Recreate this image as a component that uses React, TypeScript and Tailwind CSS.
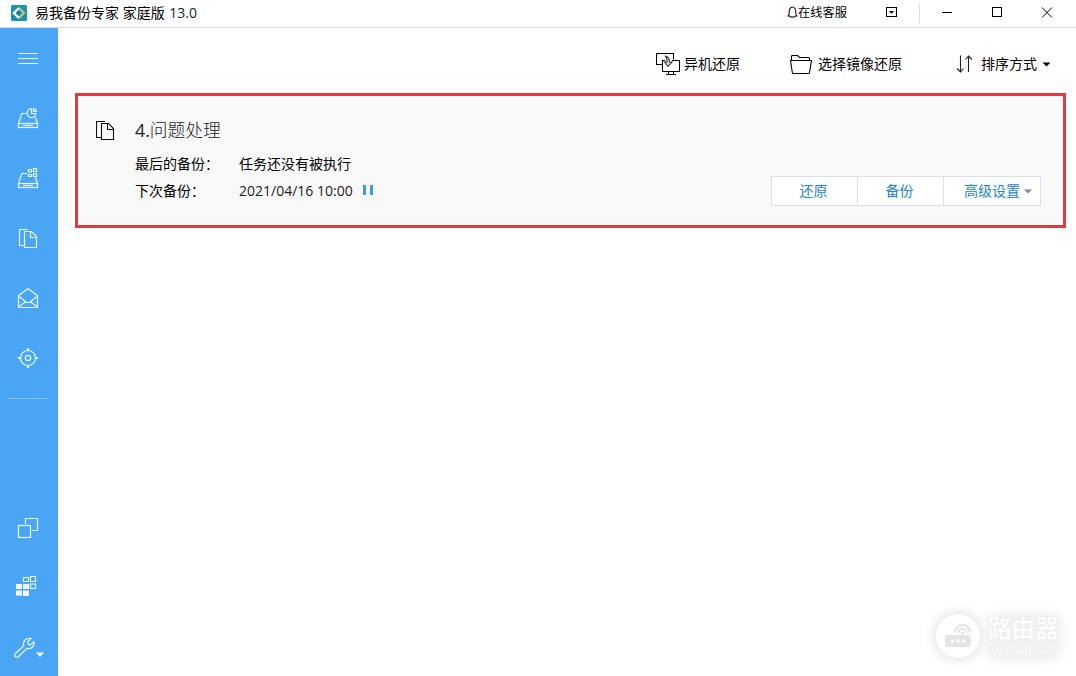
import { ReactNode } from "react";

const Icon = ({ children }: { children: ReactNode }) => (
    <svg width="32" height="32" viewBox="0 0 32 32" fill="none" stroke="#e4fbff" strokeWidth="1.2">
        {children}
    </svg>
);

const DiskBase = () => (
    <>
        <path d="M15 11.5H9.8L6.5 21.5M23.5 15.5L25.5 21.5" />
        <rect x="6.5" y="21.5" width="19" height="4" />
        <path d="M11 23.5H21" />
    </>
);

const menuIcons = [
    <Icon key="menu">
        <path d="M6 11.5H26M6 16.5H26M6 21.5H26" />
    </Icon>,
    <Icon key="disk">
        <DiskBase />
        <path d="M19.5 6.7A4.4 4.4 0 1 0 23.9 11.5H19.5V6.7" />
        <path d="M21.5 6.5V9.5H24.5C24.5 8 23 6.5 21.5 6.5Z" />
    </Icon>,
    <Icon key="system">
        <DiskBase />
        <path d="M16.5 7.5h3v2.5h-3zM21.5 6.5h3v3h-3zM16.5 12.5h3v2h-3zM21.5 11.5h3v3h-3z" />
    </Icon>,
    <Icon key="file">
        <path d="M15.5 7.5H7.5V23.5H12" />
        <path d="M12.5 9.5H19.5L24.5 14.5V25.5H12.5Z" />
        <path d="M18.5 9.5V15.5H24.5" />
    </Icon>,
    <Icon key="mail">
        <path d="M6.5 13.5L16 6.8L25.5 13.5V25.5H6.5Z" />
        <path d="M6.5 14L14.5 20.5H17.5L25.5 14M6.5 25L14 19.5M25.5 25L18 19.5" />
    </Icon>,
    <Icon key="smart">
        <circle cx="16" cy="16" r="7.5" />
        <circle cx="16" cy="16" r="2.7" />
        <path d="M16 6V9M16 23V26M6 16H9M23 16H26" strokeWidth="2" />
    </Icon>,
];

const toolIcons = [
    <Icon key="clone">
        <path d="M13.5 12V6.5H25.5V18.5H20" />
        <rect x="6.5" y="13.5" width="12" height="12" />
    </Icon>,
    <Icon key="apps">
        <path d="M4 12h6v5h-6zM11 12h6v5h-6zM4 18.5h6v5h-6zM11 18.5h6v5.5h-6z" fill="#f2ffff" stroke="none" />
        <path d="M11.5 5.5h5v4h-5zM18.5 4.5h5v5h-5zM18.5 12h5v4.5h-5z" />
    </Icon>,
    <Icon key="tools">
        <path d="M3 22L11.8 13.6C10.5 9 14 5.5 19 6.7L15.8 9.8L16.3 12.2L18.6 12.8L21.6 9.8C22.8 14.2 19 17.6 14.8 16.4L6.2 25C4.4 26.3 1.6 24 3 22Z" />
        <path d="M24 20.5H32L28 25Z" fill="#f2ffff" stroke="none" />
    </Icon>,
];

const TitleBar = () => (
    <header className="flex h-7 shrink-0 items-center border-b border-[#d9d9d9] pb-0.5 pl-[11px] text-sm">
        <svg width="16" height="16" viewBox="0 0 16 16">
            <rect width="16" height="16" rx="1.5" fill="#1693b5" />
            <path d="M8 3L3 8L8 13" fill="none" stroke="#fff" strokeWidth="2.4" />
            <path d="M8 3L13 8L8 13" fill="none" stroke="#d5c56a" strokeWidth="2" />
            <path d="M5.5 8L8 5.5V10.5Z" fill="#0b6c94" />
        </svg>
        <span className="ml-2 whitespace-pre">易我备份专家 家庭版 <span className="ml-px text-[#223]">13.0</span></span>
        <div className="ml-auto flex items-center">
            <svg width="11" height="13" viewBox="0 0 11 13" fill="none" stroke="#222" strokeWidth="1.1">
                <path d="M2 8.5C2 3 3 1 5.5 1S9 3 9 8.5L10 10H8.5C8 11.5 3 11.5 2.5 10H1Z" />
            </svg>
            <span className="w-[49px] pt-px text-[12.25px] whitespace-nowrap">在线客服</span>
            <svg className="ml-[39px]" width="12" height="12" viewBox="0 0 12 12">
                <rect x="0.5" y="0.5" width="10" height="9" fill="none" stroke="#000" />
                <path d="M3 4H8L5.5 6.7Z" />
            </svg>
            <i className="ml-[21px] h-5 w-px bg-[#dedede]" />
            <svg className="ml-[22px]" width="111" height="12" viewBox="0 0 111 12" fill="none" stroke="#000">
                <path d="M0 5.5H10" />
                <rect x="50.5" y="0.5" width="9" height="9" />
                <path d="M100 0.5L110 10.5M110 0.5L100 10.5" />
            </svg>
            <i className="w-[23px]" />
        </div>
    </header>
);

const Sidebar = () => (
    <nav className="flex w-[58px] shrink-0 flex-col overflow-hidden bg-[#4aa6f5]">
        {menuIcons.map((icon, i) => (
            <button key={i} className="flex h-[60px] w-14 shrink-0 items-center justify-center">{icon}</button>
        ))}
        <div className="mt-[10px] ml-2 h-px w-10 shrink-0 bg-[#7cbff8]" />
        <div className="mt-[99px]">
            {toolIcons.map((icon, i) => (
                <button key={i} className="flex h-[60px] w-14 items-center justify-center">{icon}</button>
            ))}
        </div>
    </nav>
);

const Toolbar = () => (
    <div className="flex h-[65px] items-center justify-end pt-[7px] pr-[25px] text-sm">
        <button className="flex items-center">
            <svg className="mr-1" width="24" height="23" viewBox="0 0 24 23" fill="none" stroke="#000" strokeWidth="1.1">
                <path d="M6 11.5H0.5V0.5H17.5V6.5" />
                <path d="M9 7.5H6.5V18.5H23.5V7.5H16" />
                <path d="M12.5 19V21.5M17.5 19V21.5M10 21.5H20" />
                <path d="M9 3C11.5 4 11 6 11 9H8.5L12 13.5L16 9H13.5C13.5 6 12.5 3.5 9 3Z" fill="#ddd" stroke="#333" />
            </svg>
            异机还原
        </button>
        <button className="ml-[50px] flex items-center">
            <svg className="mr-[6px]" width="22" height="19" viewBox="0 0 22 19" fill="none" stroke="#000" strokeWidth="1.1">
                <path d="M1.5 6V1.5Q1.5 0.5 2.5 0.5H7.5L9.5 2.5H18.5Q19.5 2.5 19.5 3.5V5.5" />
                <path d="M0.5 5.5H21.5L19.5 17.5Q19.3 18.5 18.3 18.5H3.5Q2.5 18.5 2.3 17.5Z" />
            </svg>
            选择镜像还原
        </button>
        <button className="ml-[54px] flex items-center">
            <svg className="mr-2" width="17" height="18" viewBox="0 0 17 18" fill="none" stroke="#222" strokeWidth="1.1">
                <path d="M4.5 0.5V16.5M1 13.5L4.5 17L7.5 13.5" />
                <path d="M12.5 17V1M9.5 4.5L12.5 1L16 4.5" />
            </svg>
            排序方式
            <svg className="ml-[5px]" width="9" height="5" viewBox="0 0 9 5">
                <path d="M0.5 0.5H8.5L4.5 4.5Z" />
            </svg>
        </button>
    </div>
);

const TaskCard = () => (
    <section className="mr-[10px] ml-[17px] flex h-[135px] border-[3px] border-[#e2383f] bg-[#f9f9f9]">
        <svg className="mt-[25px] ml-[18px] shrink-0" width="19" height="20" viewBox="0 0 19 20" fill="none" stroke="#111" strokeWidth="1.1">
            <path d="M9 0.5H0.5V16.5H5" />
            <path d="M5.5 2.5H12.5L17.5 7.5V18.5H5.5Z" />
            <path d="M11.5 2.5V8.5H17.5" />
        </svg>
        <div className="ml-5 pt-[21px] text-sm">
            <h2 className="h-[26px] text-[17.75px] leading-[26px] font-light text-[#222]"><span className="font-normal">4.</span>问题处理</h2>
            <div className="mt-[11px] flex h-[27px] items-start leading-5">
                <span className="w-[104px]">最后的备份：</span>
                <span>任务还没有被执行</span>
            </div>
            <div className="flex leading-5">
                <span className="w-[104px]">下次备份：</span>
                <span className="text-[#222]">2021/04/16 10:00</span>
                <span className="mt-1 ml-[10px] flex h-[10px] gap-1">
                    <i className="w-[3px] bg-[#4099dc]" />
                    <i className="w-[3px] bg-[#4099dc]" />
                </span>
            </div>
        </div>
        <div className="mt-20 mr-[22px] ml-auto flex h-[30px] divide-x divide-[#dce1e8] border border-[#dce1e8] bg-white text-sm text-[#1b86c5]">
            <button className="w-[86px] pr-0.5">还原</button>
            <button className="w-[86px] pr-0.5">备份</button>
            <button className="flex w-24 items-center justify-end pr-2">
                高级设置
                <svg className="ml-1" width="8" height="5" viewBox="0 0 8 5">
                    <path d="M0 0.5H8L4 4.5Z" fill="#7d8790" />
                </svg>
            </button>
        </div>
    </section>
);

const Watermark = () => (
    <div className="absolute right-[17px] bottom-[18px] flex items-center">
        <div className="flex size-11 items-center justify-center rounded-full bg-white shadow-[0_0_10px_4px_#eaeaea]">
            <svg width="26" height="24" viewBox="0 0 26 24">
                <rect x="0" y="11" width="26" height="12" rx="2" fill="#e5e5e5" />
                <g fill="none" stroke="#e5e5e5" strokeWidth="2.2">
                    <path d="M10 8.5A7.5 7.5 0 0 1 25 8.5" />
                    <path d="M13.5 9A4 4 0 0 1 21.5 9" />
                    <path d="M17.5 8V12" />
                </g>
                <g fill="#fff">
                    <circle cx="7.5" cy="17" r="1.7" />
                    <circle cx="13" cy="17" r="1.7" />
                    <circle cx="18.5" cy="17" r="1.7" />
                </g>
            </svg>
        </div>
        <div className="ml-2 w-[71px] rounded-xl bg-[#f2f2f2] text-white shadow-[0_0_12px_5px_#f2f2f2] [text-shadow:0_0_2px_#e4e4e4]">
            <div className="h-[26px] text-[23.5px] leading-[24px] font-medium">路由器</div>
            <div className="h-[15px] text-[12.5px] leading-[14px]">luyouqi.com</div>
        </div>
    </div>
);

const App = () => {
    return (
        <div className="relative flex h-screen w-full flex-col overflow-hidden bg-white font-['Open_Sans','Noto_Sans_CJK_SC',sans-serif] text-black">
            <TitleBar />
            <div className="flex min-h-0 flex-1">
                <Sidebar />
                <main className="min-w-0 flex-1">
                    <Toolbar />
                    <TaskCard />
                </main>
            </div>
            <Watermark />
        </div>
    );
};

export default App;
